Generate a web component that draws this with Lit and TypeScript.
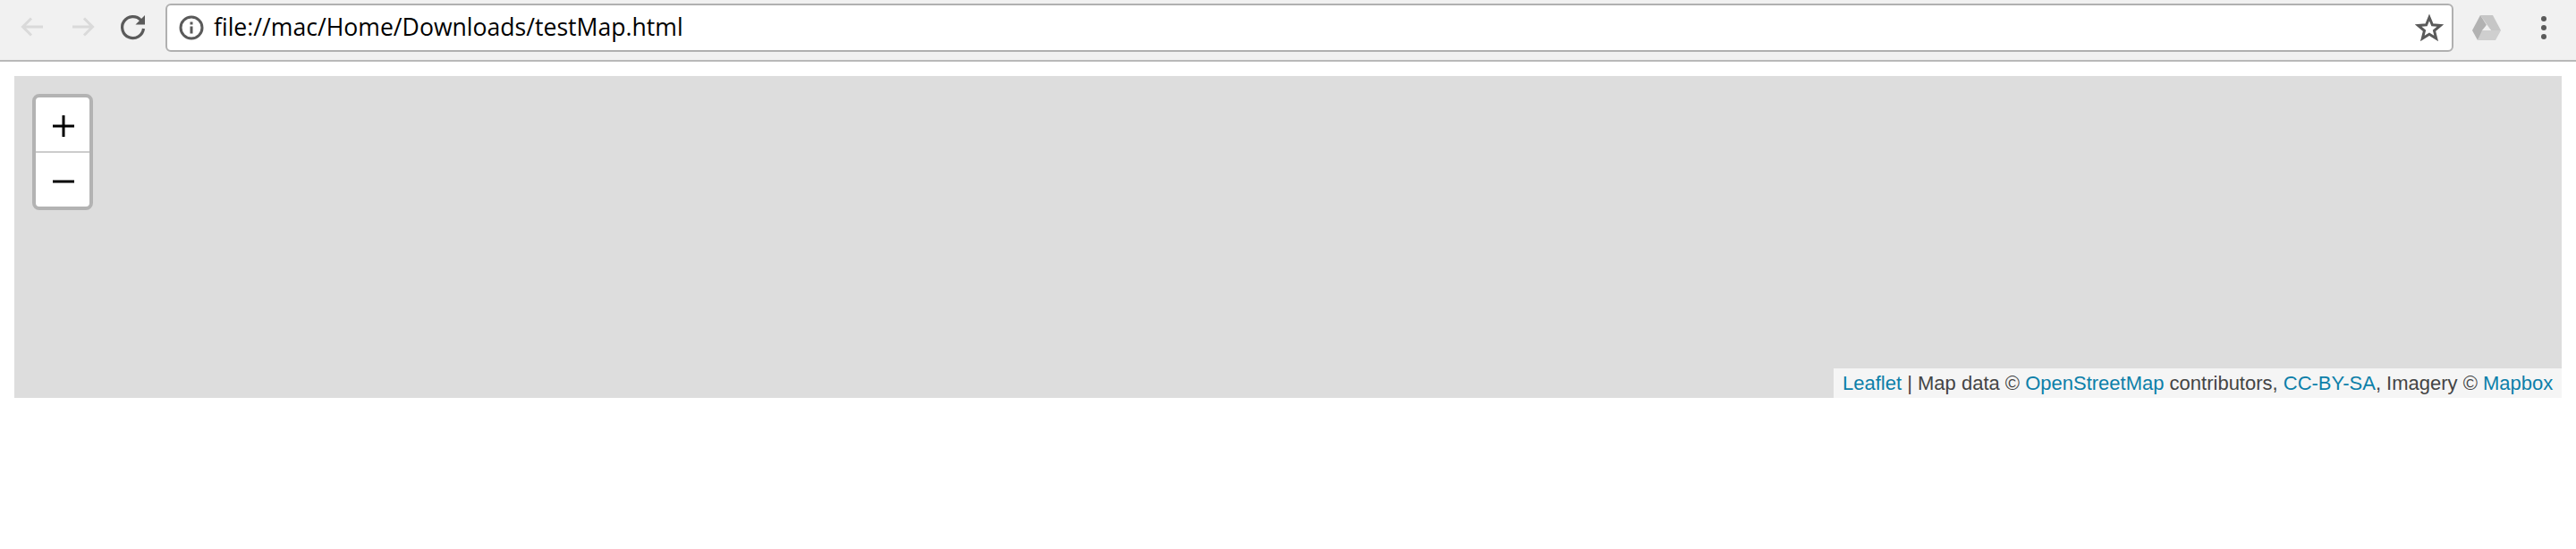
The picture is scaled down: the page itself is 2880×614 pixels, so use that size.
import { LitElement, html, css } from "lit";
import { customElement } from "lit/decorators.js";

@customElement("app-root")
export class AppRoot extends LitElement {
  static styles = css`
    :host { display: block; width: 2880px; height: 614px; background: #fff; overflow: hidden; }
    .toolbar { box-sizing: border-box; height: 69px; background: #f1f1f1; border-bottom: 2px solid #b9b9b9; display: flex; align-items: flex-start; }
    .nav { display: flex; width: 185px; height: 59px; flex: none; align-items: center; padding-left: 20px; box-sizing: border-box; gap: 25px; }
    .nav svg { width: 32px; height: 32px; flex: none; }
    .nav svg.reload { margin-left: -1px; }
    .omni { box-sizing: border-box; margin-top: 4px; width: 2558px; height: 54px; flex: none; background: #fff; border: 2px solid #b0b0b0; border-radius: 6px; display: flex; align-items: center; padding: 0 9px 0 12px; }
    .info { width: 30px; height: 30px; flex: none; }
    .url { font: 26.6px "Open Sans", sans-serif; color: #000; margin-left: 10px; flex: 1; white-space: nowrap; position: relative; top: -1px; }
    .star { width: 32px; height: 32px; flex: none; }
    .ext { display: flex; align-items: center; height: 62px; flex: none; }
    .drive { width: 32px; height: 28px; margin-left: 21px; }
    .dots { width: 10px; height: 30px; margin-left: 43px; }
    .map { margin: 16px 16px 0; height: 360px; background: #ddd; position: relative; }
    .zoom { position: absolute; left: 20px; top: 20px; width: 68px; box-sizing: border-box; border: 4px solid #b3b3b3; border-radius: 8px; background: #fff; overflow: hidden; }
    .zbtn { box-sizing: border-box; height: 60px; padding: 4px 0 0 2px; display: flex; align-items: center; justify-content: center; }
    .zbtn + .zbtn { border-top: 2px solid #ccc; height: 62px; }
    .zbtn svg { width: 24px; height: 24px; }
    .attr { position: absolute; right: 0; bottom: 0; height: 33px; width: 814px; box-sizing: border-box; padding-left: 10px; background: rgba(255,255,255,.7); display: flex; align-items: center; font: 22px "Liberation Sans", Arial, sans-serif; color: #444; white-space: pre; }
    .attr a { color: #0c7fa9; text-decoration: none; }
  `;

  render() {
    return html`
      <div class="toolbar">
        <div class="nav">
          <svg viewBox="0 0 32 32"><path d="M28 16H6M15 6.500 5.500 16l9.500 9.500" fill="none" stroke="#dadada" stroke-width="3"/></svg>
          <svg viewBox="0 0 32 32"><path d="M4 16h22M17 6.500 26.500 16 17 25.500" fill="none" stroke="#dadada" stroke-width="3"/></svg>
          <svg class="reload" viewBox="0 0 32 32"><path d="M24.500 8.500A12 12 0 1 0 27.500 18" fill="none" stroke="#5a5a5a" stroke-width="3.200"/><path d="M29 3v10.500H18.500z" fill="#5a5a5a"/></svg>
        </div>
        <div class="omni">
          <svg class="info" viewBox="0 0 30 30"><circle cx="15" cy="15" r="12" fill="none" stroke="#5a5a5a" stroke-width="3"/><rect x="13.500" y="13.500" width="3" height="8" fill="#5a5a5a"/><rect x="13.500" y="8.500" width="3" height="3" fill="#5a5a5a"/></svg>
          <span class="url">file://mac/Home/Downloads/testMap.html</span>
          <svg class="star" viewBox="0 0 32 32"><path d="M16 4.500l3.400 8.300 9 .7-6.900 5.800 2.200 8.700L16 23.300 8.300 28l2.200-8.700-6.900-5.800 9-.7z" fill="none" stroke="#5a5a5a" stroke-width="3"/></svg>
        </div>
        <div class="ext">
          <svg class="drive" viewBox="0 0 32 28"><path d="M9 0h14l9 17H21z" fill="#c6c6c6"/><path d="M9 0l7 11L6 28 0 17z" fill="#b2b2b2"/><path d="M11 17h21l-6 11H6z" fill="#cfcfcf"/><path d="M16 11l5 6H11z" fill="#f1f1f1"/></svg>
          <svg class="dots" viewBox="0 0 10 30"><circle cx="5" cy="5" r="3" fill="#5a5a5a"/><circle cx="5" cy="15" r="3" fill="#5a5a5a"/><circle cx="5" cy="25" r="3" fill="#5a5a5a"/></svg>
        </div>
      </div>
      <div class="map">
        <div class="zoom">
          <div class="zbtn"><svg viewBox="0 0 24 24"><path d="M12 0v24M0 12h24" stroke="#000" stroke-width="3" fill="none"/></svg></div>
          <div class="zbtn"><svg viewBox="0 0 24 24"><path d="M0 12h24" stroke="#000" stroke-width="3" fill="none"/></svg></div>
        </div>
        <div class="attr"><a href="#">Leaflet</a> | Map data © <a href="#">OpenStreetMap</a> contributors, <a href="#">CC-BY-SA</a>, Imagery © <a href="#">Mapbox</a></div>
      </div>
    `;
  }
}
